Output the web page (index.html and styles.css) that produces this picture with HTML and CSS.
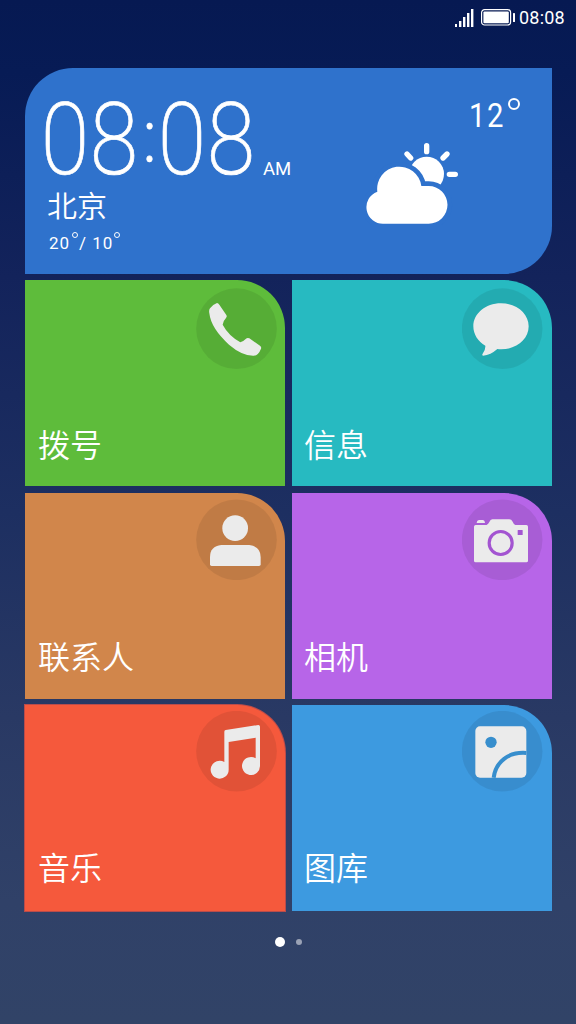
FILE: index.html
```html
<!DOCTYPE html>
<html lang="zh-CN">
<head>
<meta charset="utf-8">
<title>Home</title>
<link rel="stylesheet" href="styles.css">
</head>
<body>
<div class="phone">
  <header class="status">
    <svg class="signal" viewBox="0 0 19 18" width="19" height="18"><path d="M0 15h2v3H0zM4 12h2.4v6H4zM8 8h2.4v10H8zM12 4h2.4v14H12zM16 0h2.4v18H16z"/></svg>
    <svg class="battery" viewBox="0 0 34 17" width="34" height="17"><rect class="shell" x=".6" y=".6" width="29" height="15.4" rx="3"/><rect x="2.4" y="2.4" width="25.4" height="11.8" rx="1"/><rect x="32" y="4" width="2" height="9" rx=".6"/></svg>
    <span class="status-time">08:08</span>
  </header>

  <section class="weather">
    <div class="now">
      <div class="clock-row">
        <div class="clock"><span class="d">0</span><span class="d">8</span><span class="colon">:</span><span class="d">0</span><span class="d">8</span></div>
        <span class="ampm">AM</span>
      </div>
      <div class="city">北京</div>
      <div class="range"><span>20</span><span class="deg"></span><span class="slash">/</span><span>10</span><span class="deg last"></span></div>
    </div>
    <div class="outlook">
      <div class="temp"><span class="value">12</span><span class="ring"></span></div>
      <svg class="sky" viewBox="45 243 285 252" width="95" height="84">
        <circle cx="230" cy="342" r="52"/>
        <path class="ray" d="M230 257v18M171 282l11 12M291 282l-12 12M298 343h18"/>
        <path class="cloud" d="M101 491a49.500 49.500 0 0 1-19-96a66.500 66.500 0 0 1 132-17h22a56.500 56.500 0 0 1 0 113z"/>
      </svg>
    </div>
  </section>

  <main class="grid">
    <div class="tile dial">
      <svg class="icon" viewBox="48 36 243 243"><circle class="disc" cx="169.500" cy="158" r="121"/><path d="M90 97Q99 85 111 81Q115 81 118 86L139 117Q142 122 138 126Q130 134 128 146Q145 178 181 199Q190 196 198 188Q202 184 208 187L240 209Q245 213 243 218Q235 239 221 239Q187 240 147 206Q93 157 88 112Q86 102 90 97Z"/></svg>
      <span class="label">拨号</span>
    </div>
    <div class="tile message">
      <svg class="icon" viewBox="36 36 243 243"><circle class="disc" cx="156.500" cy="158" r="121"/><path d="M153 82C200 82 236 113 236 151C236 190 200 220 153 220Q147 220 142 219Q122 237 99 239Q95 238 98 233Q107 222 106 209C84 197 70 175 70 151C70 113 106 82 153 82Z"/></svg>
      <span class="label">信息</span>
    </div>
    <div class="tile contacts">
      <svg class="icon" viewBox="48 33 243 243"><circle class="disc" cx="169.500" cy="155.500" r="121"/><circle cx="165.500" cy="120.500" r="38.500"/><path d="M124 171H208Q242 175 242 207V229Q242 234 237 234H95Q90 234 90 229V207Q90 175 124 171Z"/></svg>
      <span class="label">联系人</span>
    </div>
    <div class="tile camera">
      <svg class="icon" viewBox="36 33 243 243"><circle class="disc" cx="156.500" cy="155.500" r="121"/><path d="M80 105Q81 96 88 96H98Q104 96 105 105ZM77 111H110Q115 108 118 102Q121 94 127 94H178Q184 94 188 101Q191 109 196 111H229Q234 111 234 116V218Q234 223 229 223H77Q72 223 72 218V116Q72 111 77 111Z"/><circle class="lens" cx="152" cy="165" r="34.500"/><rect class="flash" x="203" y="126" width="15" height="15" rx="1"/></svg>
      <span class="label">相机</span>
    </div>
    <div class="tile music">
      <svg class="icon" viewBox="48 39 243 243"><circle class="disc" cx="169.500" cy="159.500" r="121"/><path d="M137 96L235 81Q240 81 240 86V203A27 27 0 1 1 227 181V119L146 132V215A27 27 0 1 1 133 192V101Q133 97 137 96Z"/></svg>
      <span class="label">音乐</span>
    </div>
    <div class="tile gallery">
      <svg class="icon" viewBox="36 39 243 243"><circle class="disc" cx="156.500" cy="159.500" r="121"/><rect x="76" y="85" width="153" height="154" rx="14"/><circle class="spot" cx="123" cy="133" r="17"/><path class="hill" d="M131 239C137 191 176 161 229 165"/></svg>
      <span class="label">图库</span>
    </div>
  </main>

  <nav class="pages"><span class="dot on"></span><span class="dot"></span></nav>
</div>
</body>
</html>
```
FILE: styles.css
```css
* { box-sizing: border-box; }
body { margin: 0; }
.phone {
  width: 576px; height: 1024px; overflow: hidden; padding: 0 24px 0 25px;
  background: linear-gradient(#061952 0%, #071b55 7%, #13235b 27%, #1d2f61 50%, #293964 70%, #304168 88%, #314367 100%);
  color: #fff; font-family: Roboto, "Noto Sans CJK SC", sans-serif;
}
svg { display: block; fill: #fff; flex: none; }

.status { height: 68px; display: flex; align-items: flex-start; justify-content: flex-end; margin-right: -14px; padding-top: 9px; }
.battery { margin-left: 7px; }
.battery .shell { fill: none; stroke: #fff; stroke-width: 1.2; }
.status-time { width: 47px; margin-left: 4px; font-size: 18px; line-height: 18px; font-weight: 450; letter-spacing: .2px; }

.weather { height: 206px; background: #2f72cc; border-radius: 48px 0 48px 0; display: flex; justify-content: space-between; }
.now { padding: 24px 0 0 18px; }
.clock-row { display: flex; align-items: flex-end; height: 94px; }
.clock { display: flex; width: 213px; height: 94px; font-size: 100px; line-height: 96px; font-weight: 200; }
.clock span { display: flex; justify-content: center; transform: scaleX(.88); -webkit-text-stroke: .7px #fff; }
.clock .d { width: 50px; margin-left: -1px; }
.clock .d:first-child { margin-left: -3px; }
.clock .colon { width: 17px; font-size: 74px; font-weight: 300; line-height: 90px; margin-left: 2px; }
.ampm { font-size: 18.500px; line-height: 20px; margin: 0 0 7px 7px; }
.city { font-family: "Noto Sans CJK SC", sans-serif; font-weight: 350; font-size: 30px; line-height: 40px; margin-top: -2px; padding-left: 4px; }
.range { display: flex; padding: 9px 0 0 6px; font-size: 17px; line-height: 20px; letter-spacing: 1px; }
.deg { width: 6px; height: 6px; border: 1px solid #fff; border-radius: 50%; margin: -1px 1px 0 2px; }
.deg.last { margin-left: 1px; }
.slash { margin-right: 5px; }
.outlook { width: 186px; padding-top: 27px; }
.temp { display: flex; justify-content: flex-end; padding-right: 32px; font-size: 34px; line-height: 40px; letter-spacing: 2px; }
.temp .value { transform: scaleX(.86); transform-origin: right; }
.ring { width: 12px; height: 12px; border: 2px solid #fff; border-radius: 50%; margin: 3px 0 0 3px; }
.sky { margin: 6px 0 0 -1px; }
.ray { fill: none; stroke: #fff; stroke-width: 16; stroke-linecap: round; }
.cloud { stroke: #2f72cc; stroke-width: 28; paint-order: stroke; }

.grid { display: grid; grid-template-columns: 260px 260px; grid-template-rows: 206px 206px 206px; column-gap: 7px; row-gap: 6.500px; margin-top: 6px; }
.tile { border-radius: 0 48px 0 0; display: flex; flex-direction: column; justify-content: space-between; padding: 8px 0 21px 13px; }
.icon { width: 81px; height: 81px; fill: #ebebeb; margin-left: 158px; }
.message .icon, .camera .icon, .gallery .icon { margin-left: 157px; }
.contacts, .camera, .music, .gallery { padding-top: 6px; }
.contacts, .camera { padding-bottom: 22px; }
.music, .gallery { padding-bottom: 23px; }
.disc { fill: rgba(0, 0, 0, .08); }
.dial { background: #5ebc3b; }
.message { background: #27bac1; }
.contacts { background: #d1864b; }
.camera { background: #b765e8; }
.music { background: #f5593c; box-shadow: 0 0 0 1px #b94c4b; }
.gallery { background: #3d9ae0; }
.label { font-size: 32px; line-height: 44px; font-family: "Noto Sans CJK SC", sans-serif; font-weight: 350; }
.message .label, .camera .label, .gallery .label { margin-left: -1px; }
.lens { fill: none; stroke: #a354d1; stroke-width: 9.500; }
.flash { fill: #a354d1; }
.spot { fill: #378ecd; }
.hill { fill: none; stroke: #378ecd; stroke-width: 12; }

.pages { display: flex; align-items: center; height: 10px; margin: 26px 0 0 250px; gap: 11px; }
.dot { width: 6px; height: 6px; border-radius: 50%; background: #9aa2b5; }
.dot.on { width: 10px; height: 10px; background: #fff; }
```
